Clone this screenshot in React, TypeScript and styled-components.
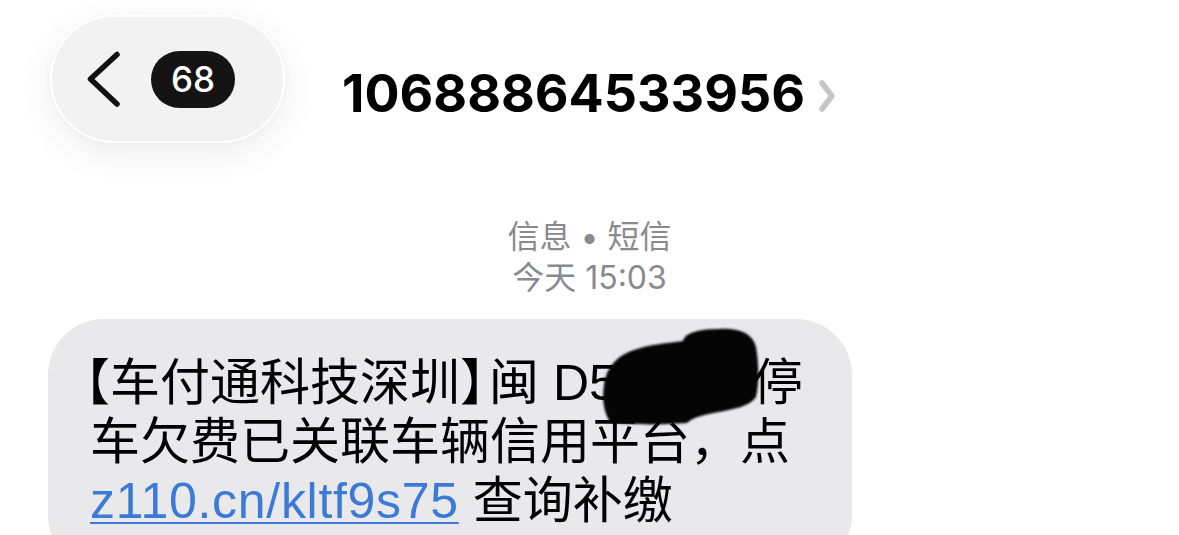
import styled, { createGlobalStyle } from 'styled-components'

const GlobalStyle = createGlobalStyle`
  html, body {
    margin: 0;
    padding: 0;
    background: #ffffff;
  }
  body {
    width: 1179px;
    height: 535px;
    overflow: hidden;
    font-family: Inter, "Noto Sans CJK SC", sans-serif;
    -webkit-font-smoothing: antialiased;
  }
`

const Screen = styled.main`
  display: flex;
  flex-direction: column;
  height: 535px;
  overflow: hidden;
`

const NavBar = styled.header`
  display: grid;
  grid-template-columns: 1fr auto 1fr;
  height: 158px;
`

const BackPill = styled.button`
  justify-self: start;
  align-self: start;
  margin: 15px 0 0 50px;
  display: flex;
  align-items: center;
  gap: 27px;
  box-sizing: border-box;
  width: 235px;
  height: 128px;
  padding: 0 0 0 32px;
  border: 2px solid #ffffff;
  border-radius: 64px;
  background: #f2f2f2;
  box-shadow: 0 10px 40px rgba(0, 0, 0, 0.07), 0 2px 8px rgba(0, 0, 0, 0.03);
  cursor: pointer;
`

const Badge = styled.span`
  display: inline-flex;
  align-items: center;
  justify-content: center;
  width: 84px;
  height: 57px;
  border-radius: 29px;
  background: #141414;
  color: #ffffff;
  font: 500 35px/1 Inter, sans-serif;
`

const Title = styled.h1`
  grid-column: 2;
  align-self: start;
  margin: 68px 0 0;
  display: flex;
  align-items: center;
  gap: 12px;
  font: 700 52px/52px Inter, "Liberation Sans", sans-serif;
  color: #000000;
`

const Meta = styled.div`
  margin-top: 73px;
  text-align: center;
  color: #8a8a8e;
  font: 400 32px/41px Inter, "Noto Sans CJK SC", sans-serif;
`

const Bubble = styled.section`
  position: relative;
  box-sizing: border-box;
  width: 804px;
  margin: 21px 0 0 48px;
  padding: 35px 60px 40px 42px;
  border-radius: 56px;
  background: #e9e9eb;
  color: #000000;
  white-space: nowrap;
  font: 400 50px/59px "Liberation Sans", "Noto Sans CJK SC", sans-serif;
`

const Bracket = styled.span<{ $open?: boolean }>`
  font-feature-settings: "halt";
  margin-left: ${(p) => (p.$open ? '-5px' : '0')};
  margin-right: ${(p) => (p.$open ? '0' : '4px')};
`

const Spacer = styled.span<{ $w: number }>`
  display: inline-block;
  width: ${(p) => p.$w}px;
`

const Link = styled.a`
  color: #3b7ad6;
  letter-spacing: 0.7px;
  text-decoration: underline;
  text-decoration-thickness: 2px;
  text-underline-offset: 4px;
`

const Redaction = styled.svg`
  position: absolute;
  left: 553px;
  top: 8px;
  width: 160px;
  height: 98px;
  filter: blur(1.2px);
`

function BackChevron() {
  return (
    <svg width="40" height="60" viewBox="0 0 40 60" fill="none">
      <path
        d="M33 5.5 L6.5 30 L33 55"
        stroke="#111111"
        strokeWidth="5.5"
        strokeLinecap="round"
        strokeLinejoin="round"
      />
    </svg>
  )
}

function DetailChevron() {
  return (
    <svg width="20" height="34" viewBox="0 0 20 34" fill="none" style={{ marginTop: 4 }}>
      <path
        d="M5 4 L15 17 L5 30"
        stroke="#c5c5c9"
        strokeWidth="5.5"
        strokeLinecap="round"
        strokeLinejoin="round"
      />
    </svg>
  )
}

export default function App() {
  return (
    <>
      <GlobalStyle />
      <Screen>
        <NavBar>
          <BackPill type="button" aria-label="返回">
            <BackChevron />
            <Badge>68</Badge>
          </BackPill>
          <Title>
            10688864533956
            <DetailChevron />
          </Title>
        </NavBar>

        <Meta>
          信息 • 短信
          <br />
          今天 15:03
        </Meta>

        <Bubble>
          <Bracket $open>【</Bracket>车付通科技深圳<Bracket>】</Bracket>闽 D5<Spacer $w={136} aria-hidden="true" />停
          <br />
          车欠费已关联车辆信用平台，点
          <br />
          <Link href="#">z110.cn/kltf9s75</Link> 查询补缴
          <Redaction viewBox="0 0 160 98" aria-hidden="true">
            <path
              d="M30 24 C48 17 68 16 82 14 C84 5 100 2 118 2 C136 1 151 5 155 20 C158 36 158 58 155 70 C148 80 132 82 118 85 C102 88 92 90 86 96 C60 98 30 98 9 95 C2 84 1 70 3 58 C5 44 12 31 30 24 Z"
              fill="#050505"
            />
          </Redaction>
        </Bubble>
      </Screen>
    </>
  )
}
